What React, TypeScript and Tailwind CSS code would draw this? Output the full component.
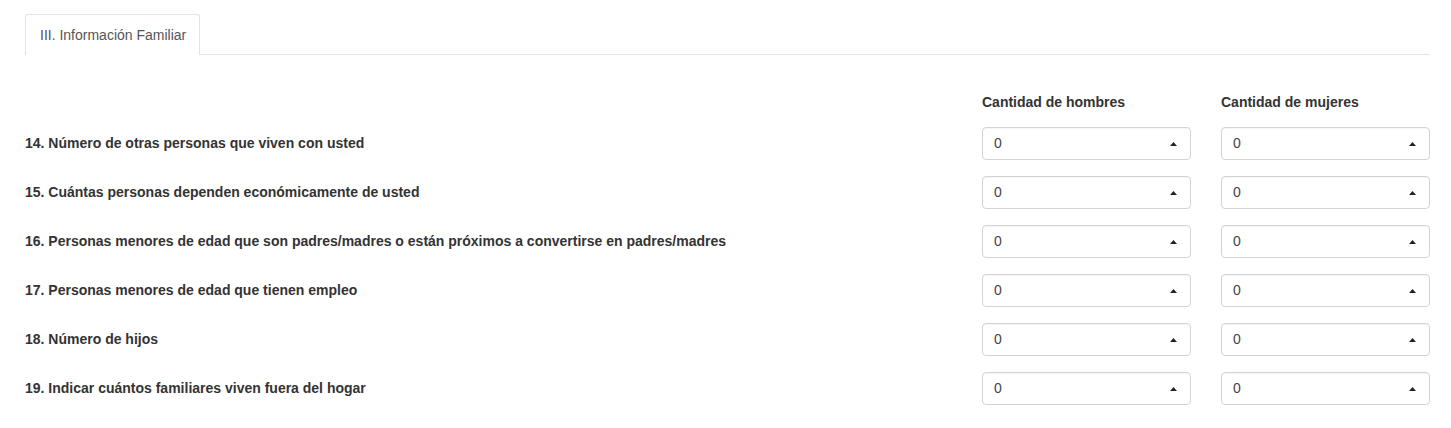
import React, { useState } from 'react';

interface Question {
  id: number;
  label: string;
}

const questions: Question[] = [
  { id: 14, label: '14. Número de otras personas que viven con usted' },
  { id: 15, label: '15. Cuántas personas dependen económicamente de usted' },
  {
    id: 16,
    label:
      '16. Personas menores de edad que son padres/madres o están próximos a convertirse en padres/madres',
  },
  { id: 17, label: '17. Personas menores de edad que tienen empleo' },
  { id: 18, label: '18. Número de hijos' },
  { id: 19, label: '19. Indicar cuántos familiares viven fuera del hogar' },
];

const CountSelect: React.FC<{ value: number; onChange: (v: number) => void }> = ({
  value,
  onChange,
}) => (
  <div className="relative h-[33px] w-full">
    <select
      value={value}
      onChange={(e) => onChange(parseInt(e.target.value))}
      className="h-full w-full appearance-none rounded-[4px] border border-[#d4d4d4] bg-white pl-[11px] pr-8 text-[14px] text-[#444] shadow-[inset_0_1px_1px_rgba(0,0,0,0.04)] focus:outline-none"
    >
      {Array.from({ length: 11 }, (_, i) => (
        <option key={i} value={i}>
          {i}
        </option>
      ))}
    </select>
    <svg
      className="pointer-events-none absolute right-[14px] top-1/2 -translate-y-1/2"
      width="7"
      height="4"
      viewBox="0 0 7 4"
    >
      <path d="M0 4 L3.5 0 L7 4 Z" fill="#222" />
    </svg>
  </div>
);

const App: React.FC = () => {
  const [values, setValues] = useState<Record<string, number>>({});

  const setValue = (key: string, v: number) =>
    setValues({ ...values, [key]: v });

  return (
    <div className="min-h-screen bg-white pl-[25px] pr-[21px] pt-[14px] font-['Liberation_Sans',Arial,sans-serif]">
      <div className="flex border-b border-[#e3e3e3]">
        <div className="-mb-px flex h-[41px] w-[175px] items-center rounded-t-[3px] border border-b-0 border-[#e3e3e3] bg-white pl-[14px] text-[14px] text-[#555]">
          III. Información Familiar
        </div>
      </div>

      <div className="grid grid-cols-[1fr_209px_209px] gap-x-[30px] pt-[37px]">
        <div />
        <div className="text-[14px] font-bold text-[#333]">Cantidad de hombres</div>
        <div className="text-[14px] font-bold text-[#333]">Cantidad de mujeres</div>
      </div>

      <div className="mt-[14px] flex flex-col gap-[16px]">
        {questions.map((q) => (
          <div
            key={q.id}
            className="grid grid-cols-[1fr_209px_209px] items-center gap-x-[30px]"
          >
            <label className="text-[14px] font-bold text-[#333]">{q.label}</label>
            <CountSelect
              value={values[`${q.id}-h`] ?? 0}
              onChange={(v) => setValue(`${q.id}-h`, v)}
            />
            <CountSelect
              value={values[`${q.id}-m`] ?? 0}
              onChange={(v) => setValue(`${q.id}-m`, v)}
            />
          </div>
        ))}
      </div>
    </div>
  );
};

export default App;
